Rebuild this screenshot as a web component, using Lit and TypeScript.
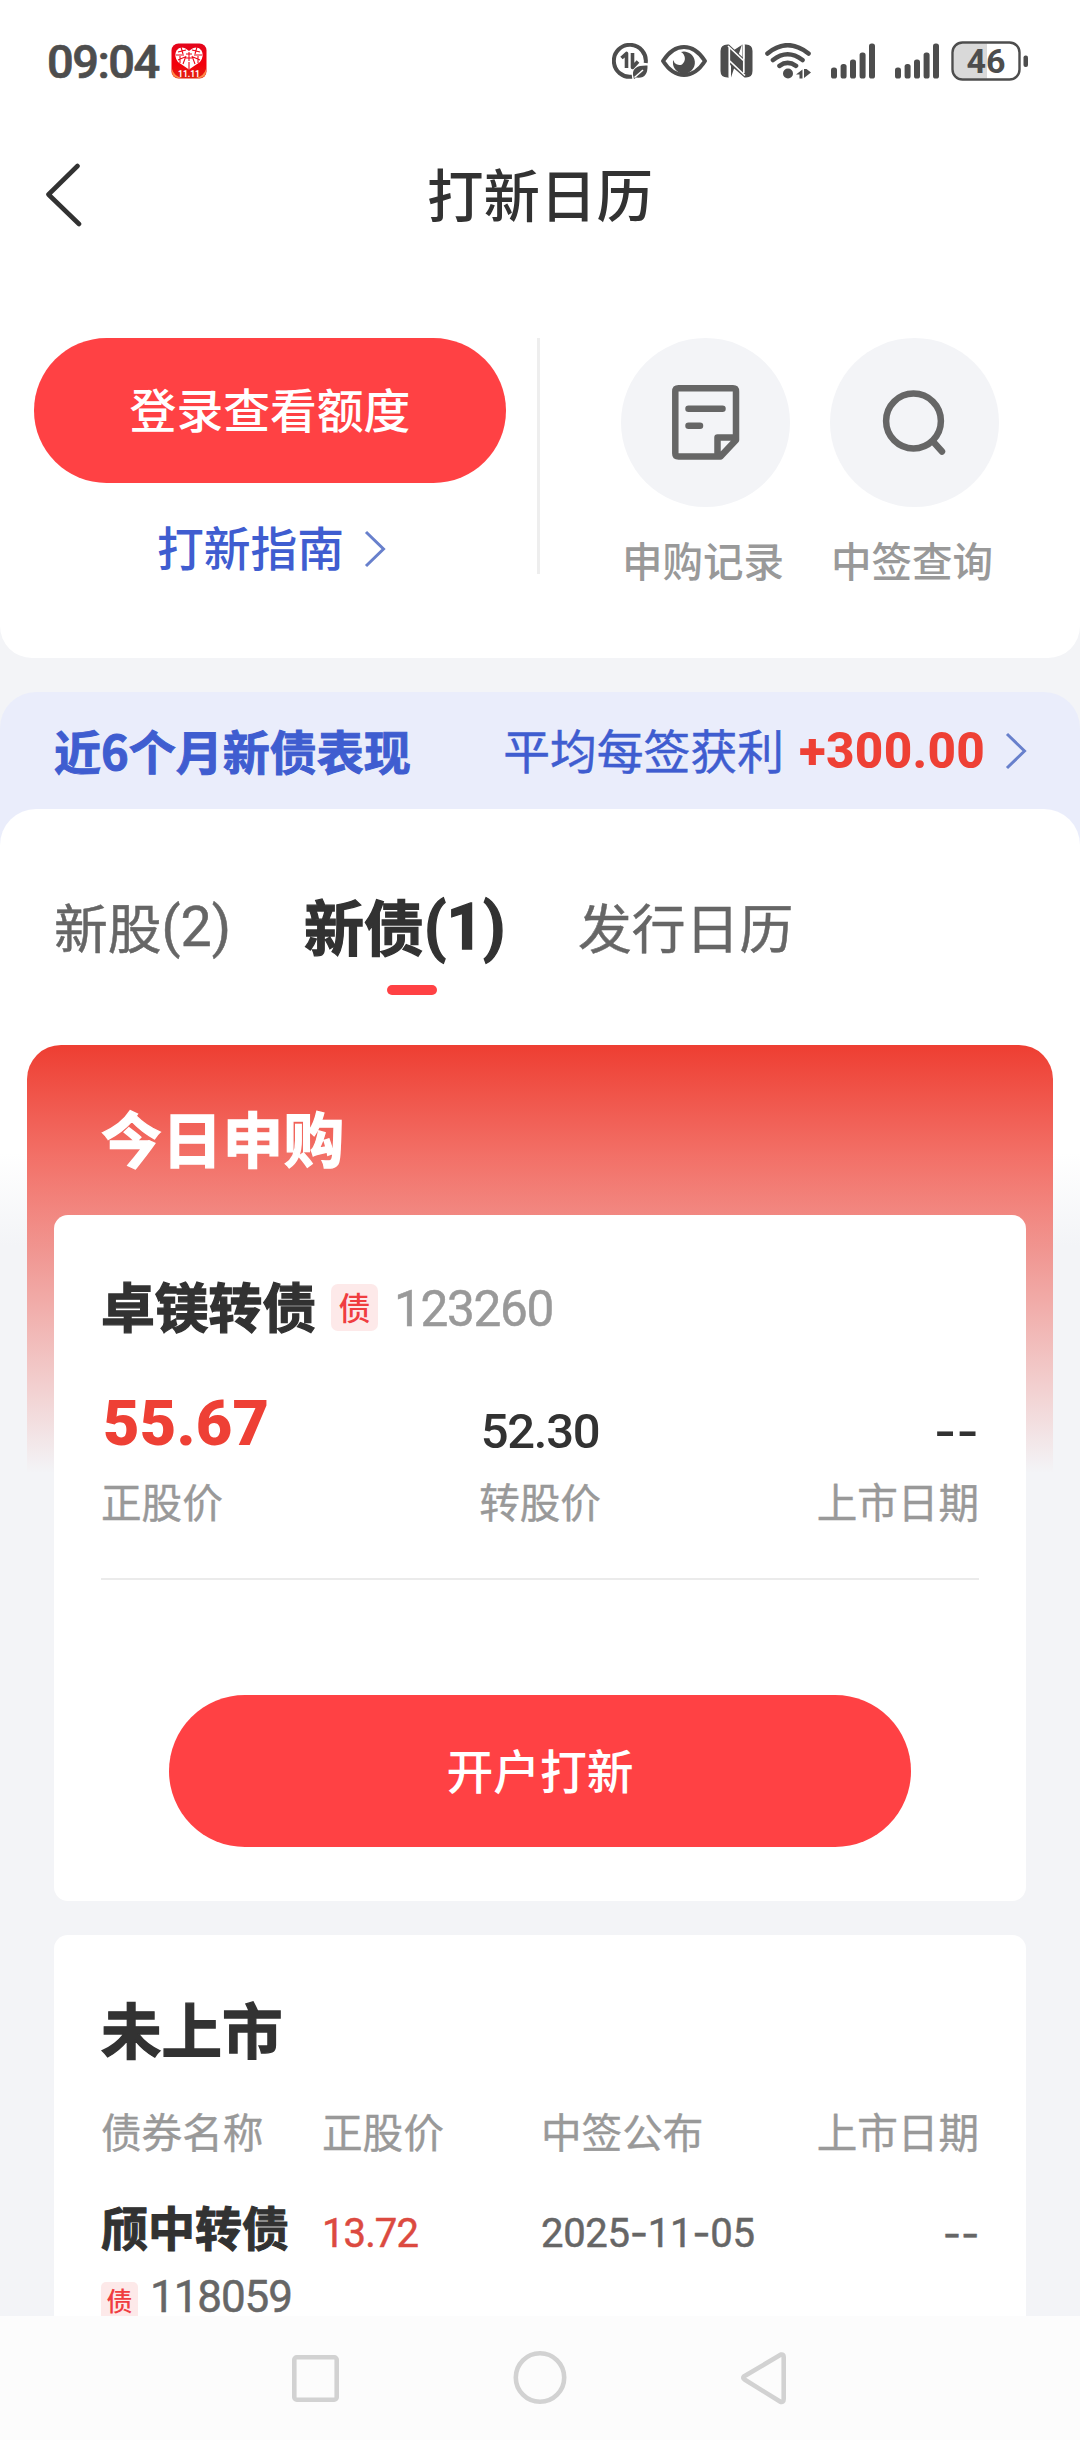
import { LitElement, html, css, svg } from "lit";
import { customElement, property } from "lit/decorators.js";

const shared = css`
  * { box-sizing: border-box; }
  svg { display: block; flex: none; }
  .t {
    display: block;
    font-family: "Noto Sans CJK SC", sans-serif;
    line-height: 1;
    padding-bottom: 0.09em;
    white-space: nowrap;
  }
  .n {
    display: block;
    font-family: Roboto, "Noto Sans CJK SC", sans-serif;
    line-height: 1;
    white-space: nowrap;
  }
`;

@customElement("status-bar")
class StatusBar extends LitElement {
  static styles = [shared, css`
    :host { display: flex; align-items: center; height: 122px; padding: 0 52px 0 47px; color: #4d4d4d; }
    .time { font-size: 47px; font-weight: 500; letter-spacing: -1.5px; width: 124px; -webkit-text-stroke: 0.7px #4d4d4d; }
    .icons { display: flex; align-items: center; margin-left: auto; }
    .icons svg { margin-left: 12px; }
    .icons svg.sig { margin-left: 20px; }
    .promo { font: 700 8.5px Roboto, sans-serif; }
    .pct { font: 700 34px Roboto, sans-serif; }
  `];
  bars() {
    return svg`<g fill="#4d4d4d">
      <rect x="0" y="24" width="6" height="11" rx="2.6"/><rect x="9.6" y="20.5" width="6" height="14.5" rx="2.6"/>
      <rect x="19" y="16" width="6" height="19" rx="2.6"/><rect x="28.6" y="9" width="6" height="26" rx="2.6"/>
      <rect x="38" y="0" width="6" height="35" rx="2.6"/></g>`;
  }
  render() {
    return html`
      <span class="n time">09:04</span>
      <svg width="36" height="36" viewBox="0 0 36 36">
        <defs><linearGradient id="g" x1="0" y1="0" x2="0" y2="1"><stop offset="0" stop-color="#e3051c"/><stop offset=".6" stop-color="#f3000c"/><stop offset="1" stop-color="#e02010"/></linearGradient></defs>
        <rect x=".5" y=".5" width="35" height="35" rx="7" fill="url(#g)"/>
        <path d="M1 26Q3 33 11 35H7Q1 34 1 29zM35 26Q33 33 25 35H29Q35 34 35 29z" fill="#ff8a4a"/>
        <path d="M18 26.5L7 19Q2.500 13 5.500 7.500Q10 1.500 18 8Q26 1.500 30.500 7.500Q33.500 13 29 19z" fill="#fff"/>
        <path d="M5 12h8M7 17l7-3M10 4l2 7M15 7l-8 2M12 21l3-8M18 26v-7M24 21l-3-8M31 12h-8M29 17l-7-3M26 4l-2 7M21 7l8 2M15 15h6M15 11h6M18 9v9M9 13v7M27 13v7" stroke="#ee0515" stroke-width="1.100" fill="none"/>
        <text class="promo" x="18" y="34.200" text-anchor="middle" fill="#fff">11.11</text>
      </svg>
      <div class="icons">
        <svg width="36" height="36" viewBox="0 0 36 36">
          <path d="M20 33.700A16 16 0 1 1 33.700 20" fill="none" stroke="#4d4d4d" stroke-width="4"/>
          <path d="M9.500 15l5-4.500V25M20.500 10V24.500L26 18.500" fill="none" stroke="#4d4d4d" stroke-width="3.600" stroke-linejoin="round"/>
          <path d="M21 32Q20 22 35.500 22.500Q36 36 24.500 34.500L22 36z" fill="#4d4d4d"/>
          <path d="M22.500 34.500L31 27" stroke="#fff" stroke-width="1.500"/>
        </svg>
        <svg width="48" height="34" viewBox="0 0 48 34">
          <path d="M3 17Q12 3 24 3T45 17Q36 31 24 31T3 17z" fill="none" stroke="#4d4d4d" stroke-width="4" stroke-linejoin="round"/>
          <path d="M21 8A11 11 0 1 1 13.200 16A6.500 6.500 0 0 0 22 20.500A7.500 7.500 0 0 0 21 8z" fill="#4d4d4d"/>
        </svg>
        <svg width="33" height="34" viewBox="0 0 33 34">
          <path d="M7.500 .5H9L24.500 15V.5H26Q32.500 .5 32.500 7V27Q32.500 33.500 26 33.500H24.500L9 20V33.500H7.500Q.5 33.500 .5 27V7Q.5 .5 7.500 .5z" fill="#4d4d4d"/>
          <path d="M11 8L22.500 18.500V.5M22 .5V28.500L11 18V33.500" fill="#4d4d4d"/>
          <path d="M9.300 3V33.500M8 2L24 17M23.800 .5V29M9.300 16.500L25 31.500" stroke="#fff" stroke-width="1.700" fill="none"/>
          <path d="M12.500 11.500L22 20.500V26L12.500 17z" fill="#4d4d4d"/>
        </svg>
        <svg width="46" height="36" viewBox="0 0 46 36">
          <g fill="none" stroke="#4d4d4d" stroke-width="4.600" stroke-linecap="round"><path d="M2.500 10.500Q22.500-6 43.500 10.500M8 17Q22.500 5.500 37.500 17M14.500 22.800Q22.500 17 31 22.800"/></g>
          <circle cx="23" cy="30.500" r="5" fill="#4d4d4d"/>
          <path d="M31 31.500l6.500-5v9h-3v-4zM39 26H41.500l4.500 3.500L39 35z" fill="#4d4d4d"/>
        </svg>
        <svg class="sig" width="44" height="36" viewBox="0 0 44 35">${this.bars()}</svg>
        <svg class="sig" width="44" height="36" viewBox="0 0 44 35">${this.bars()}</svg>
        <svg width="77" height="40" viewBox="0 0 77 40">
          <path d="M12 2.500H36V37.500H12Q2.500 37.500 2.500 28V12Q2.500 2.500 12 2.500z" fill="#d9d9d9"/>
          <rect x="1.500" y="1.500" width="67" height="37" rx="10" fill="none" stroke="#4d4d4d" stroke-width="2.400"/>
          <rect x="72.500" y="14.500" width="4.500" height="11.500" rx="2" fill="#4d4d4d"/>
          <text class="pct" x="35" y="32" text-anchor="middle" fill="#4d4d4d">46</text>
        </svg>
      </div>`;
  }
}

@customElement("bond-tag")
class BondTag extends LitElement {
  @property({ type: Boolean, reflect: true }) small = false;
  static styles = [shared, css`
    :host { display: flex; align-items: center; justify-content: center; width: 47px; height: 47px; border-radius: 7px;
      background: #fde9e9; color: #f03d40; font-size: 32px; font-weight: 500; }
    :host([small]) { width: 37px; height: 38px; font-size: 26px; border-radius: 5px; }
  `];
  render() { return html`<span class="t">债</span>`; }
}

const chevron = html`<svg width="22" height="38" viewBox="0 0 22 38"><path d="M2 2L19.500 19L2 36" fill="none" stroke="#6880cc" stroke-width="3"/></svg>`;

@customElement("app-root")
class AppRoot extends LitElement {
  static styles = [shared, css`
    :host { display: block; }
    .screen { display: flex; flex-direction: column; width: 1080px; height: 2440px; overflow: hidden; background: #f3f4f7; color: #323232; }
    .scroll { flex: 1; min-height: 0; overflow: hidden; }
    .top { height: 658px; background: #fff; border-radius: 0 0 32px 32px; }
    .head { display: grid; grid-template-columns: 100px 1fr 100px; align-items: center; height: 146px; padding: 0 44px; }
    .title { font-size: 56.500px; font-weight: 500; text-align: center; }
    .quota { display: flex; padding: 70px 81px 0 34px; }
    .left { width: 472px; display: flex; flex-direction: column; align-items: center; }
    .btn { display: flex; align-items: center; justify-content: center; background: #ff4144; color: #fff; font-size: 46.800px; font-weight: 500; }
    .login { width: 472px; height: 145px; border-radius: 73px; }
    .guide { display: flex; align-items: center; gap: 20px; margin-top: 40px; color: #3f5dd0; font-size: 46.800px; font-weight: 500; padding-left: 3px; }
    .rule { width: 3px; height: 236px; margin-left: 31px; background: #eee; }
    .acts { display: flex; gap: 40px; margin-left: 81px; }
    .act { width: 169px; display: flex; flex-direction: column; align-items: center; gap: 33px; color: #999; font-size: 40.500px; font-weight: 500; }
    .disc { display: flex; width: 169px; height: 169px; border-radius: 50%; background: #f3f4f7; }
    .act .t { margin-left: -5px; }
    .banner { display: flex; align-items: center; height: 153px; margin-top: 34px; padding: 0 53px 36px 54px; border-radius: 36px 36px 0 0;
      background: #eaedfb; color: #3f5dd0; font-size: 46.800px; }
    .banner .t { padding-bottom: 0.06em; }
    .banner .name { font-weight: 700; font-size: 47px; -webkit-text-stroke: 1px currentColor; }
    .avg { margin-left: auto; -webkit-text-stroke: 0.5px currentColor; }
    .gain { margin: 0 18px 0 15px; width: 188px; color: #ee4035; font-size: 49.500px; font-weight: 800; letter-spacing: 0.300px; padding-top: 3px; }
    .panel { margin-top: -36px; border-radius: 36px 36px 0 0; background: linear-gradient(#fff 344px, #f3f4f7 437px); }
    .tabs { display: grid; grid-template-columns: 250px 274px auto; padding: 79px 0 0 54px; height: 236px; color: #666; font-size: 53.800px; -webkit-text-stroke: 0.5px currentColor; }
    .tab { display: flex; flex-direction: column; }
    .label { display: flex; align-items: center; height: 80px; }
    .label .n { font-size: 55.500px; }
    .on { color: #323232; font-size: 60px; font-weight: 700; -webkit-text-stroke: 1.300px currentColor; }
    .on .label .n { font-size: 64px; }
    .bar { width: 50px; height: 10px; margin: 17px 0 0 83px; border-radius: 5px; background: #ff4144; }
    .today { margin: 0 27px; padding: 0 27px; border-radius: 34px 34px 0 0; background: linear-gradient(#ee3e32, rgba(240, 80, 75, 0) 428px); }
    .caption { display: flex; align-items: center; height: 170px; padding: 21px 0 0 47px; color: #fff; font-size: 60.800px; font-weight: 700; -webkit-text-stroke: 1.300px currentColor; }
    .card { background: #fff; border-radius: 14px; padding: 0 47px; }
    .bond { height: 686px; padding-top: 46px; }
    .who { display: flex; align-items: center; height: 93px; }
    .who .name { width: 230px; font-size: 53.800px; font-weight: 700; -webkit-text-stroke: 1.300px currentColor; }
    .code { margin-left: 16px; color: #999; font-size: 49.500px; letter-spacing: -1.300px; padding-top: 5px; -webkit-text-stroke: 0.5px currentColor; }
    .stats { display: grid; grid-template-columns: 1fr 1fr 1fr; }
    .stat { display: flex; flex-direction: column; }
    .mid { align-items: center; }
    .end { align-items: flex-end; }
    .val { display: flex; align-items: flex-end; height: 102px; }
    .price { color: #ee4035; font-size: 63px; font-weight: 900; letter-spacing: 0.200px; padding-bottom: 1px; padding-left: 2px; }
    .fig { font-size: 49px; font-weight: 500; letter-spacing: -1.300px; }
    .dash { font-family: Inter, sans-serif; }
    .fig.dash { letter-spacing: 0; }
    .lab { color: #999; font-size: 40.600px; margin-top: 25px; -webkit-text-stroke: 0.4px currentColor; }
    .hr { height: 2px; margin-top: 53px; background: #ebebeb; }
    .open { width: 742px; height: 152px; margin: 115px auto 0; border-radius: 76px; }
    .pending { margin: 34px 54px 0; height: 420px; padding-top: 63px; }
    .pending h2 { margin: 0; font-size: 60.500px; font-weight: 700; -webkit-text-stroke: 1.300px currentColor; }
    .cols { display: grid; grid-template-columns: 221px 219px 1fr auto; }
    .hd { margin-top: 47px; color: #999; font-size: 40.600px; -webkit-text-stroke: 0.4px currentColor; }
    .row { margin-top: 46px; align-items: center; color: #666; font-size: 40px; letter-spacing: -0.300px; -webkit-text-stroke: 0.500px currentColor; }
    .row .t { font-size: 47px; font-weight: 700; color: #323232; letter-spacing: 0; -webkit-text-stroke-width: 1.100px; }
    .row .n { padding-top: 12px; }
    .row .red { color: #dc4a40; letter-spacing: -0.900px; }
    .sub { display: flex; align-items: flex-start; margin-top: 28px; height: 38px; }
    .sub .n { margin-left: 12px; margin-top: -3px; color: #666; font-size: 44px; line-height: 37px; letter-spacing: -1.100px; -webkit-text-stroke: 0.500px currentColor; }
    .nav { display: flex; justify-content: center; align-items: center; height: 124px; background: #fcfcfc; }
  `];
  render() {
    return html`
      <main class="screen">
        <div class="scroll">
          <section class="top">
            <status-bar></status-bar>
            <div class="head">
              <svg width="40" height="64" viewBox="0 0 40 64"><path d="M33.500 3L4.500 31.500L35 61" fill="none" stroke="#323232" stroke-width="4.600" stroke-linecap="round" stroke-linejoin="round"/></svg>
              <span class="t title">打新日历</span>
            </div>
            <div class="quota">
              <div class="left">
                <div class="btn login"><span class="t">登录查看额度</span></div>
                <div class="guide"><span class="t">打新指南</span>${chevron}</div>
              </div>
              <div class="rule"></div>
              <div class="acts">
                <div class="act">
                  <div class="disc"><svg width="169" height="169" viewBox="0 0 169 169">
                    <g fill="none" stroke="#666" stroke-width="6.500" stroke-linejoin="round" stroke-linecap="round">
                    <path d="M97 118.500H57.500Q54.300 118.500 54.300 115.500V53.500Q54.300 50.300 57.500 50.300H112Q115 50.300 115 53.500V102L99.500 118.500H96.500V99.500H114M67.500 70.700H101.500M67.500 87.700H79"/></g>
                  </svg></div>
                  <span class="t">申购记录</span>
                </div>
                <div class="act">
                  <div class="disc"><svg width="169" height="169" viewBox="0 0 169 169">
                    <g fill="none" stroke="#666" stroke-width="6.500" stroke-linecap="round"><circle cx="83.500" cy="83" r="27.400"/><path d="M103 103.500L112 113.500"/></g>
                  </svg></div>
                  <span class="t">中签查询</span>
                </div>
              </div>
            </div>
          </section>
          <section class="banner">
            <span class="t name">近6个月新债表现</span>
            <span class="t avg">平均每签获利</span>
            <span class="n gain">+300.00</span>
            ${chevron}
          </section>
          <section class="panel">
            <nav class="tabs">
              <div class="tab"><div class="label"><span class="t">新股</span><span class="n">(2)</span></div></div>
              <div class="tab on"><div class="label"><span class="t">新债</span><span class="n">(1)</span></div><div class="bar"></div></div>
              <div class="tab"><div class="label"><span class="t">发行日历</span></div></div>
            </nav>
            <div class="today">
              <div class="caption"><span class="t">今日申购</span></div>
              <div class="card bond">
                <div class="who"><span class="t name">卓镁转债</span><bond-tag></bond-tag><span class="n code">123260</span></div>
                <div class="stats">
                  <div class="stat"><div class="val"><span class="n price">55.67</span></div><span class="t lab">正股价</span></div>
                  <div class="stat mid"><div class="val"><span class="n fig">52.30</span></div><span class="t lab">转股价</span></div>
                  <div class="stat end"><div class="val"><span class="n fig dash">--</span></div><span class="t lab">上市日期</span></div>
                </div>
                <div class="hr"></div>
                <div class="btn open"><span class="t">开户打新</span></div>
              </div>
            </div>
            <div class="card pending">
              <h2 class="t">未上市</h2>
              <div class="cols hd"><span class="t">债券名称</span><span class="t">正股价</span><span class="t">中签公布</span><span class="t">上市日期</span></div>
              <div class="cols row"><span class="t">颀中转债</span><span class="n red">13.72</span><span class="n">2025<span class="dash">-</span>11<span class="dash">-</span>05</span><span class="n dash">--</span></div>
              <div class="sub"><bond-tag small></bond-tag><span class="n">118059</span></div>
            </div>
          </section>
        </div>
        <footer class="nav">
          <svg width="500" height="56" viewBox="0 0 500 56">
            <g fill="none" stroke="#d2d2d2" stroke-width="4.600" stroke-linejoin="round">
              <rect x="4.300" y="7.300" width="42.400" height="42.400" rx="2.500"/>
              <circle cx="250" cy="27.500" r="24.200"/>
              <path d="M453.800 26.500L491 4.500Q493.700 4 493.700 7V49Q493.700 53 490 51.500L454.500 29.500Q452.500 28 453.800 26.500z"/>
            </g>
          </svg>
        </footer>
      </main>`;
  }
}
